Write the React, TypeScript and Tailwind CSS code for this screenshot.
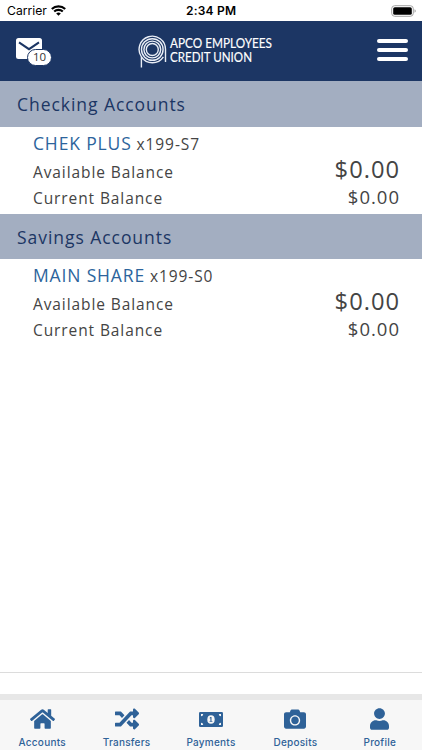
import React from 'react';
import { FaCamera, FaHome, FaRandom, FaUser } from 'react-icons/fa';

const groups = [
  {
    title: 'Checking Accounts',
    name: 'CHEK PLUS',
    number: 'x199-S7',
    available: '$0.00',
    current: '$0.00'
  },
  {
    title: 'Savings Accounts',
    name: 'MAIN SHARE',
    number: 'x199-S0',
    available: '$0.00',
    current: '$0.00'
  }
];

const tabs = [
  { label: 'Accounts', icon: <FaHome className="w-[25px] h-[24px]" /> },
  { label: 'Transfers', icon: <FaRandom className="w-[24px] h-[24px]" /> },
  { label: 'Payments', icon: <BillIcon /> },
  { label: 'Deposits', icon: <FaCamera className="w-[22px] h-[22px]" /> },
  { label: 'Profile', icon: <FaUser className="w-[19px] h-[22px]" /> }
];

function BillIcon() {
  return (
    <svg className="w-[24px] h-[15px]" viewBox="0 0 24 15">
      <rect width="24" height="15" rx="1.3" fill="currentColor" />
      <g fill="#f7f7f7">
        <path d="M2 2h2.2A2.2 2.2 0 0 1 2 4.2z" />
        <path d="M22 2h-2.2A2.2 2.2 0 0 0 22 4.2z" />
        <path d="M2 13h2.2A2.2 2.2 0 0 0 2 10.8z" />
        <path d="M22 13h-2.2A2.2 2.2 0 0 1 22 10.8z" />
        <ellipse cx="12" cy="7.5" rx="3.7" ry="4.3" />
      </g>
      <path
        d="M11.4 5h1.1v3.9h.9v.9h-2.8v-.9h.8V6.3l-.7.3v-.9z"
        fill="currentColor"
      />
    </svg>
  );
}

function StatusBar() {
  return (
    <div className="relative h-[21px] pt-px flex items-center justify-between pl-[7px] pr-[6px] bg-white text-black font-['Inter',sans-serif]">
      <div className="flex items-center gap-[4px]">
        <span className="text-[12.2px] leading-none">Carrier</span>
        <svg className="w-[15px] h-[11px]" viewBox="0 0 15 11" fill="none" stroke="#000" strokeWidth="2.1">
          <path d="M.8 4.1a9.6 9.6 0 0 1 13.4 0" />
          <path d="M3.2 6.6a6.1 6.1 0 0 1 8.6 0" />
          <path d="M7.5 10.8 5.2 8.5a3.3 3.3 0 0 1 4.6 0z" fill="#000" stroke="none" />
        </svg>
      </div>
      <span className="absolute left-[186px] text-[12px] leading-none font-semibold tracking-[0.2px] whitespace-nowrap">
        2:34 PM
      </span>
      <svg className="w-[25px] h-[12px] -mt-px" viewBox="0 0 25 12">
        <rect x=".7" y=".7" width="21.6" height="10.6" rx="3" fill="none" stroke="#a3a3a3" />
        <rect x="2.2" y="2.2" width="18.6" height="7.6" rx="1.6" fill="#000" />
        <path d="M23.6 4.2v3.6c1.4-.6 1.4-3 0-3.6z" fill="#888" />
      </svg>
    </div>
  );
}

function Logo() {
  return (
    <svg className="w-[138px] h-[40px]" viewBox="0 -4 138 40" fill="none">
      <g stroke="#e9eef6" strokeWidth="1.4">
        <circle cx="14.3" cy="14.5" r="6" />
        <circle cx="14.3" cy="14.5" r="8.4" />
        <circle cx="14.3" cy="14.5" r="10.8" />
        <path d="M3.4 32.5V21.8A13.2 13.2 0 1 1 27.5 14.5V27" />
        <path d="M3.4 21.8A13.2 13.2 0 0 0 25.4 21.8" />
      </g>
      <g fill="#fff" stroke="#fff" strokeWidth=".15" fontFamily="Lato, sans-serif" fontSize="12.5">
        <text x="32" y="12.9" textLength="102" lengthAdjust="spacingAndGlyphs">
          APCO EMPLOYEES
        </text>
        <text x="32" y="27" textLength="82" lengthAdjust="spacingAndGlyphs">
          CREDIT UNION
        </text>
      </g>
    </svg>
  );
}

function Header() {
  return (
    <header className="h-[60px] flex items-start pl-[16px] pr-[14px] bg-[#1c3664]">
      <div className="relative mt-[17px] w-[36px] h-[28px]">
        <svg className="w-[26px] h-[21px]" viewBox="0 0 26 21">
          <rect width="26" height="21" rx="2.5" fill="#fff" />
          <path d="m3 4.4 10 6.8 10-6.8" fill="none" stroke="#1c3664" strokeWidth="2" />
        </svg>
        <span className="absolute left-[11px] top-[11px] w-[25px] h-[17px] rounded-full border border-[#1c3664] bg-white text-[#333] text-[11.5px] leading-[14px] text-center font-['Open_Sans',sans-serif]">
          10
        </span>
      </div>
      <div className="mt-[10px] ml-[86px]">
        <Logo />
      </div>
      <div className="mt-[18px] ml-auto w-[31px] flex flex-col gap-[5px]">
        <div className="h-[4px] rounded-full bg-white" />
        <div className="h-[4px] rounded-full bg-white" />
        <div className="h-[4px] rounded-full bg-white" />
      </div>
    </header>
  );
}

export default function App() {
  return (
    <div className="w-[422px] h-[750px] flex flex-col overflow-hidden bg-white font-['Open_Sans',sans-serif]">
      <StatusBar />
      <Header />

      {/* Account list */}
      <main className="flex-1 text-[#444] whitespace-nowrap">
        {groups.map((group) => (
          <section key={group.title}>
            <h2 className="h-[45.5px] pl-[17px] bg-[#a3aec1] text-[#1c3664] text-[17.5px] leading-[47px] tracking-[0.95px]">
              {group.title}
            </h2>
            <div className="h-[87px] pl-[33px] pr-[22px] pt-[3px]">
              <div className="h-[27px] flex items-baseline gap-[5px] leading-[26px]">
                <span className="text-[17.5px] tracking-[0.85px] text-[#2c649c]">{group.name}</span>
                <span className="text-[15.5px] tracking-[0.9px]">{group.number}</span>
              </div>
              <div className="h-[26px] flex items-baseline justify-between leading-[25px]">
                <span className="text-[15.5px] tracking-[0.9px]">Available Balance</span>
                <span className="text-[23.7px] tracking-[1px]">{group.available}</span>
              </div>
              <div className="h-[27px] flex items-baseline justify-between leading-[27px]">
                <span className="text-[15.5px] tracking-[0.9px]">Current Balance</span>
                <span className="text-[18.5px] tracking-[1px]">{group.current}</span>
              </div>
            </div>
          </section>
        ))}
      </main>

      {/* Bottom tabs */}
      <div className="h-[22px] border-t border-[#dcdcdc]" />
      <nav className="h-[56px] grid grid-cols-5 border-t-[6px] border-[#e7e7e7] bg-[#f7f7f7] text-[#2f6298]">
        {tabs.map((tab) => (
          <div key={tab.label} className="flex flex-col items-center">
            <div className="mt-[7px] h-[24px] flex items-center">{tab.icon}</div>
            <span className="mt-[4px] text-[10px] leading-[14px] font-medium tracking-[0.25px] font-['Inter',sans-serif]">
              {tab.label}
            </span>
          </div>
        ))}
      </nav>
    </div>
  );
}
